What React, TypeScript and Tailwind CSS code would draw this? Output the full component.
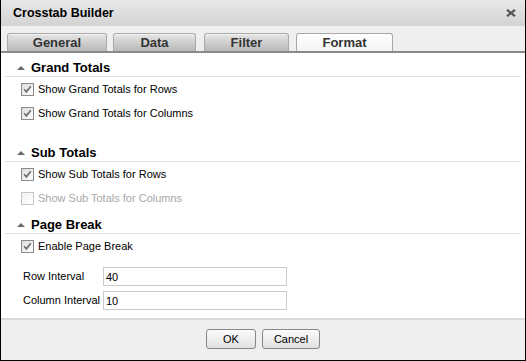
const font = { fontFamily: '"Liberation Sans", Arial, sans-serif' };

function Check({ checked, disabled }: { checked?: boolean; disabled?: boolean }) {
  return (
    <span
      className={`flex h-[13px] w-[13px] shrink-0 items-center justify-center border bg-gradient-to-br from-[#dcdcdc] to-[#ffffff] ${
        disabled ? "border-[#c6c6c6] from-[#f0f0f0]" : "border-[#8a8a8a]"
      }`}
    >
      {checked && (
        <svg width="9" height="9" viewBox="0 0 9 9">
          <path d="M1.2 4.2 L3.4 6.8 L7.8 1.2" fill="none" stroke="#6e6e6e" strokeWidth="1.7" />
        </svg>
      )}
    </span>
  );
}

function Option({ label, checked, disabled }: { label: string; checked?: boolean; disabled?: boolean }) {
  return (
    <label
      className={`flex h-[24px] items-center gap-[4px] pl-[20px] text-[11px] ${
        disabled ? "text-[#a8a8a8]" : "text-black"
      }`}
    >
      <Check checked={checked} disabled={disabled} />
      {label}
    </label>
  );
}

function Header({ title }: { title: string }) {
  return (
    <div className="mx-[4px] flex h-[24px] shrink-0 items-center gap-[6px] border-b border-[#e0e0e0] pl-[12px] pt-[7px]">
      <svg width="8" height="4" viewBox="0 0 8 4">
        <path d="M0 4 L4 0 L8 4 Z" fill="#6a6a6a" />
      </svg>
      <span className="text-[13px] font-bold text-black">{title}</span>
    </div>
  );
}

function Tab({ label, active, w }: { label: string; active?: boolean; w: string }) {
  return (
    <div
      className={`${w} flex h-[18px] items-center justify-center rounded-t-[3px] border border-b-0 text-[13px] font-bold text-[#333] ${
        active
          ? "border-[#a8a8a8] bg-gradient-to-b from-[#ffffff] to-[#f4f4f4]"
          : "border-[#a9a9a9] bg-gradient-to-b from-[#e6e6e6] to-[#b9b9b9] shadow-[inset_0_1px_0_#f4f4f4]"
      }`}
    >
      {label}
    </div>
  );
}

function Field({ label, value }: { label: string; value: string }) {
  return (
    <div className="flex h-[24px] items-center text-[11px] text-black">
      <span className="w-[80px] whitespace-nowrap">{label}</span>
      <div className="flex h-[19px] w-[184px] items-center border border-[#cbcbcb] pl-[2px] pt-[2px]">{value}</div>
    </div>
  );
}

export default function App() {
  return (
    <div className="h-[361px] w-[526px] bg-white" style={font}>
      <div className="flex h-[361px] w-[526px] flex-col border border-t-0 border-black">
        <div className="flex h-[26px] shrink-0 items-center justify-between bg-gradient-to-b from-[#e8e8e8] to-[#d3d3d3] pl-[12px] pr-[9px]">
          <span className="text-[12.5px] font-bold text-black">Crosstab Builder</span>
          <svg width="10" height="8" viewBox="0 0 10 8">
            <path d="M1 0.8 L9 7.2 M9 0.8 L1 7.2" stroke="#555" strokeWidth="2.2" />
          </svg>
        </div>
        <div className="flex h-[27px] shrink-0 items-end gap-[7px] border-b-[2px] border-[#8a8a8a] bg-[#efefef] pl-[6px]">
          <Tab label="General" w="w-[100px]" />
          <div className="-ml-[1px] flex gap-[8px]">
            <Tab label="Data" w="w-[83px]" />
            <Tab label="Filter" w="w-[85px]" />
          </div>
          <Tab label="Format" w="w-[97px]" active />
        </div>
        <div className="h-[265px] shrink-0 bg-white">
          <Header title="Grand Totals" />
          <Option label="Show Grand Totals for Rows" checked />
          <Option label="Show Grand Totals for Columns" checked />
          <div className="h-[13px]" />
          <Header title="Sub Totals" />
          <Option label="Show Sub Totals for Rows" checked />
          <Option label="Show Sub Totals for Columns" disabled />
          <Header title="Page Break" />
          <Option label="Enable Page Break" checked />
          <div className="flex flex-col pl-[22px] pt-[6px]">
            <Field label="Row Interval" value="40" />
            <Field label="Column Interval" value="10" />
          </div>
        </div>
        <div className="flex flex-1 items-center justify-center gap-[6px] border-t-[2px] border-[#dadada] bg-[#efefef] pb-[2px]">
          <button className="h-[20px] w-[50px] rounded-[3px] border border-[#888] bg-gradient-to-b from-[#fbfbfb] to-[#e0e0e0] text-[11px] text-black">
            OK
          </button>
          <button className="h-[20px] w-[58px] rounded-[3px] border border-[#888] bg-gradient-to-b from-[#fbfbfb] to-[#e0e0e0] text-[11px] text-black">
            Cancel
          </button>
        </div>
      </div>
    </div>
  );
}
